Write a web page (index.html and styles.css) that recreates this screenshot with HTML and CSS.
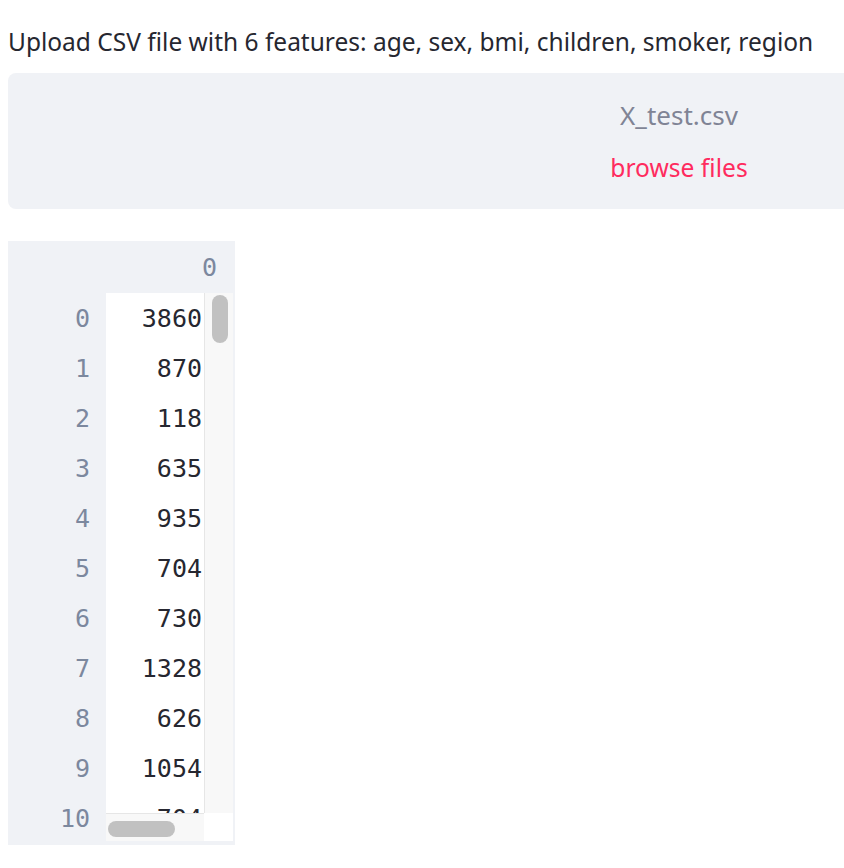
FILE: index.html
```html
<!DOCTYPE html>
<html>
<head>
<meta charset="utf-8">
<link rel="stylesheet" href="styles.css">
</head>
<body>
<div class="page">
  <p class="label">Upload CSV file with 6 features: age, sex, bmi, children, smoker, region</p>
  <div class="uploader">
    <div class="file-name">X_test.csv</div>
    <div class="browse">browse files</div>
  </div>
  <div class="table">
    <div class="thead">
      <div class="corner-head"></div>
      <div class="col-head">0</div>
    </div>
    <div class="tbody">
      <div class="index-col">
        <div class="idx">0</div><div class="idx">1</div><div class="idx">2</div><div class="idx">3</div>
        <div class="idx">4</div><div class="idx">5</div><div class="idx">6</div><div class="idx">7</div>
        <div class="idx">8</div><div class="idx">9</div><div class="idx">10</div>
      </div>
      <div class="scroll-area">
        <div class="scroll-main">
          <div class="data-col">
            <div class="cell">3860</div><div class="cell">870</div><div class="cell">118</div><div class="cell">635</div>
            <div class="cell">935</div><div class="cell">704</div><div class="cell">730</div><div class="cell">1328</div>
            <div class="cell">626</div><div class="cell">1054</div><div class="cell">704</div>
          </div>
          <div class="vtrack"><div class="vthumb"></div></div>
        </div>
        <div class="hbar">
          <div class="htrack"><div class="hthumb"></div></div>
          <div class="scroll-corner"></div>
        </div>
      </div>
    </div>
  </div>
</div>
</body>
</html>
```

FILE: styles.css
```css
html, body {
  margin: 0;
  padding: 0;
  background: #ffffff;
  overflow: hidden;
}
.page {
  padding: 0 0 0 8px;
  width: 1400px;
  font-family: "Noto Sans", "DejaVu Sans", sans-serif;
  color: #262730;
}
.label {
  margin: 0;
  padding-top: 27px;
  height: 73px;
  font-size: 24.5px;
  line-height: 30px;
  box-sizing: border-box;
  white-space: nowrap;
}
.uploader {
  box-sizing: border-box;
  width: 1342px;
  height: 136px;
  background: #f0f2f6;
  border-radius: 8px;
  display: flex;
  flex-direction: column;
  align-items: center;
  padding-top: 28px;
}
.file-name {
  font-size: 26px;
  line-height: 28px;
  color: #808495;
  height: 28px;
}
.browse {
  margin-top: 25px;
  font-size: 24.6px;
  line-height: 28px;
  color: #ff2b5e;
}
.table {
  margin-top: 32px;
  width: 227px;
  height: 604px;
  background: #f0f2f6;
  font-family: "DejaVu Sans Mono", "Liberation Mono", monospace;
  font-size: 25px;
}
.thead {
  display: flex;
  height: 52px;
}
.corner-head {
  width: 98px;
}
.col-head {
  width: 127px;
  padding-right: 16px;
  box-sizing: border-box;
  line-height: 54px;
  color: #7c889e;
  text-align: right;
}
.tbody {
  display: flex;
  height: 548px;
}
.index-col {
  width: 98px;
  height: 548px;
  overflow: hidden;
}
.idx {
  height: 50px;
  line-height: 52px;
  text-align: right;
  padding-right: 16px;
  color: #7c889e;
}
.scroll-area {
  width: 127px;
  display: flex;
  flex-direction: column;
}
.scroll-main {
  display: flex;
  height: 520px;
}
.data-col {
  width: 98px;
  height: 520px;
  overflow: hidden;
  background: #ffffff;
}
.cell {
  height: 50px;
  line-height: 52px;
  text-align: right;
  padding-right: 2px;
  color: #262730;
}
.vtrack {
  width: 29px;
  box-sizing: border-box;
  background: #f8f8f8;
  border-left: 1px solid #e6e6e6;
  padding: 2px 0 0 7px;
}
.vthumb {
  width: 16px;
  height: 48px;
  border-radius: 8px;
  background: #c1c1c1;
}
.hbar {
  display: flex;
  height: 28px;
}
.htrack {
  width: 98px;
  box-sizing: border-box;
  background: #f8f8f8;
  border-top: 1px solid #e6e6e6;
  padding: 7px 0 0 2px;
}
.hthumb {
  width: 67px;
  height: 16px;
  border-radius: 8px;
  background: #c1c1c1;
}
.scroll-corner {
  width: 29px;
  background: #ffffff;
}
```
